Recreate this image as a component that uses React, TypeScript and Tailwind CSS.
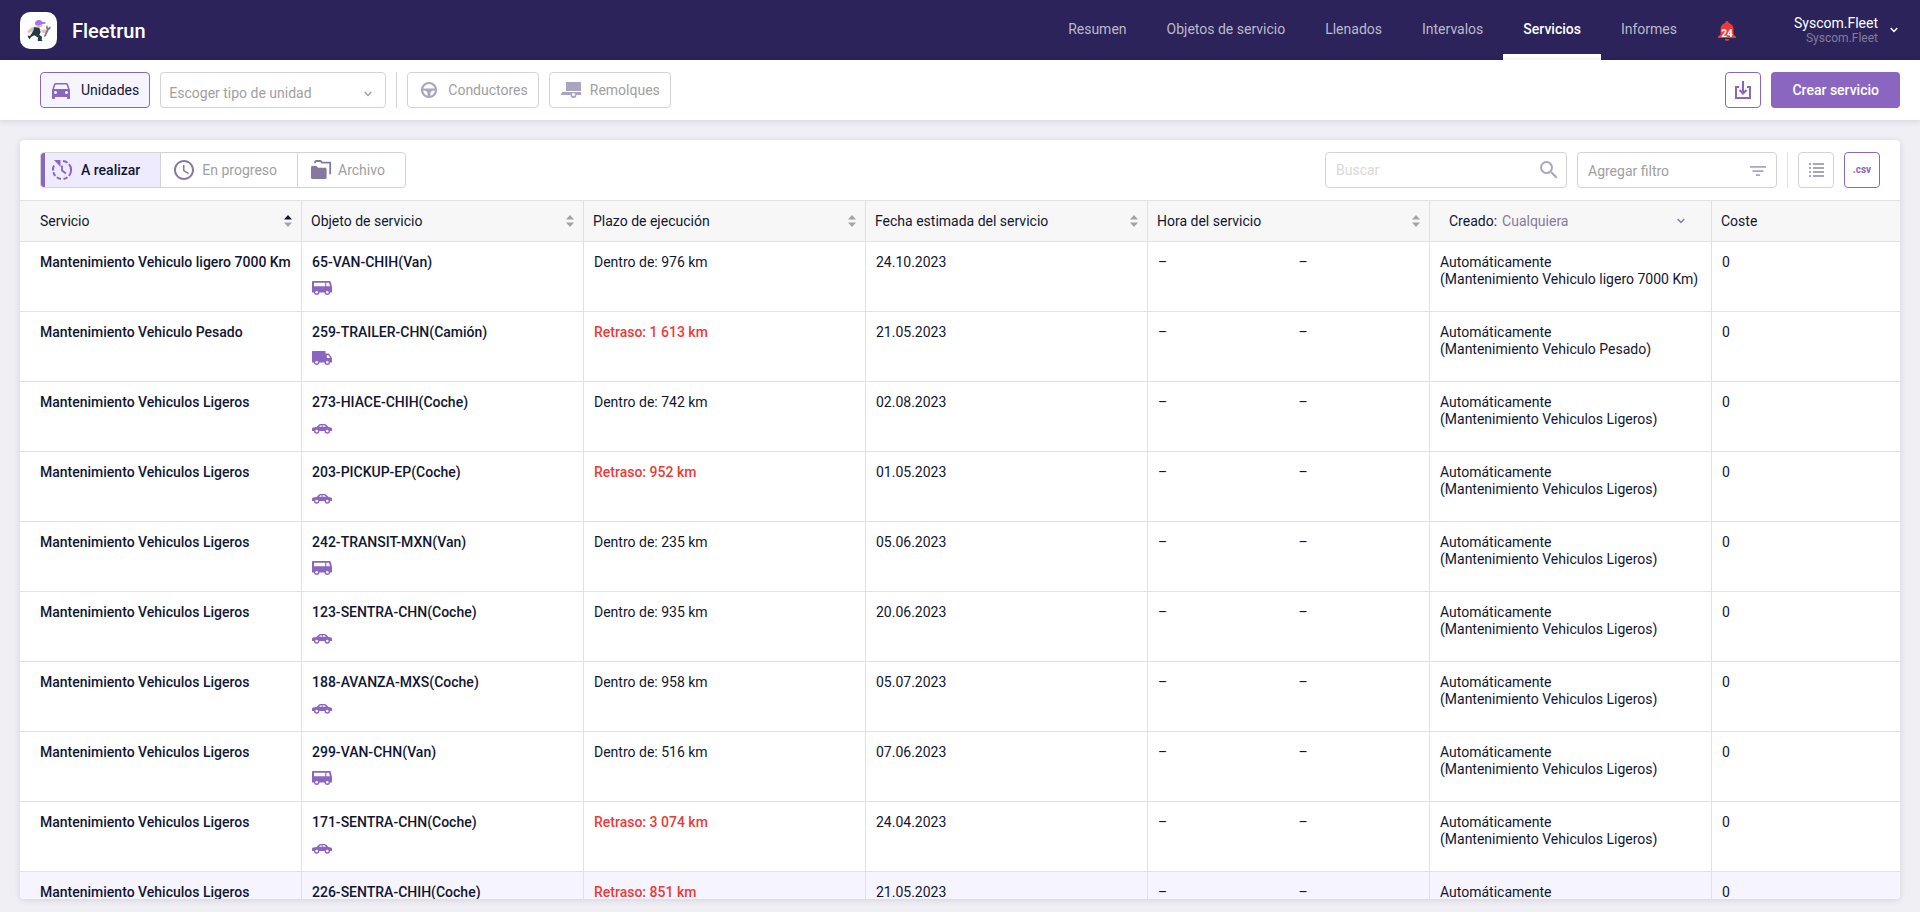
import type { ReactNode } from "react";
import { MdAccessTime, MdDirectionsCar, MdSearch } from "react-icons/md";
import clsx from "clsx";

type VehicleType = "Van" | "Camión" | "Coche";

const navItems = [
  "Resumen",
  "Objetos de servicio",
  "Llenados",
  "Intervalos",
  "Servicios",
  "Informes",
];

const columns = [
  { title: "Servicio", sorted: true },
  { title: "Objeto de servicio" },
  { title: "Plazo de ejecución" },
  { title: "Fecha estimada del servicio" },
  { title: "Hora del servicio" },
];

const services: {
  id: number;
  name: string;
  unit: string;
  type: VehicleType;
  term: string;
  late?: boolean;
  date: string;
  active?: boolean;
}[] = [
  { id: 1, name: "Mantenimiento Vehiculo ligero 7000 Km", unit: "65-VAN-CHIH", type: "Van", term: "Dentro de: 976 km", date: "24.10.2023" },
  { id: 2, name: "Mantenimiento Vehiculo Pesado", unit: "259-TRAILER-CHN", type: "Camión", term: "Retraso: 1 613 km", late: true, date: "21.05.2023" },
  { id: 3, name: "Mantenimiento Vehiculos Ligeros", unit: "273-HIACE-CHIH", type: "Coche", term: "Dentro de: 742 km", date: "02.08.2023" },
  { id: 4, name: "Mantenimiento Vehiculos Ligeros", unit: "203-PICKUP-EP", type: "Coche", term: "Retraso: 952 km", late: true, date: "01.05.2023" },
  { id: 5, name: "Mantenimiento Vehiculos Ligeros", unit: "242-TRANSIT-MXN", type: "Van", term: "Dentro de: 235 km", date: "05.06.2023" },
  { id: 6, name: "Mantenimiento Vehiculos Ligeros", unit: "123-SENTRA-CHN", type: "Coche", term: "Dentro de: 935 km", date: "20.06.2023" },
  { id: 7, name: "Mantenimiento Vehiculos Ligeros", unit: "188-AVANZA-MXS", type: "Coche", term: "Dentro de: 958 km", date: "05.07.2023" },
  { id: 8, name: "Mantenimiento Vehiculos Ligeros", unit: "299-VAN-CHN", type: "Van", term: "Dentro de: 516 km", date: "07.06.2023" },
  { id: 9, name: "Mantenimiento Vehiculos Ligeros", unit: "171-SENTRA-CHN", type: "Coche", term: "Retraso: 3 074 km", late: true, date: "24.04.2023" },
  { id: 10, name: "Mantenimiento Vehiculos Ligeros", unit: "226-SENTRA-CHIH", type: "Coche", term: "Retraso: 851 km", late: true, date: "21.05.2023", active: true },
];

function Logo() {
  return (
    <svg viewBox="0 0 111 111" className="h-[37px] w-[37px]" aria-hidden="true">
      <path d="M30 48l18-5 6 8-10 6-8 2z" fill="#c9c6cc" />
      <path d="M22 59l7-9 8 3-3 8-7 2z" fill="#f3b4ae" />
      <path d="M48 37h18l1 5-5 4H51z" fill="#f3b4ae" />
      <path d="M45 36c0-9 5-12 12-12 6 0 9 3 10 6l10 1-1 4-9 2-8 3H47z" fill="#a374ee" />
      <path d="M42 46l17 1 3 12-4 10 8 5-1 9 3 4H54l-1-4 2-6-12-7-9 4-5 8-6-8 3-4 3 3 7-10 5-9z" fill="#243a45" />
      <path d="M58 48l12 8-1 6-8-4z" fill="#dddbe0" />
      <path d="M66 55l8-3 6 4-1 6-9 2z" fill="#f3b4ae" />
      <path d="M80 40l3 1v5l3 1 4-4 2 1-1 7-5 3-8 18-5 3-1-3 8-19-2-6z" fill="#7d7c83" />
    </svg>
  );
}

function SteeringIcon() {
  return (
    <svg viewBox="0 0 18 18" className="h-[18px] w-[18px]" aria-hidden="true">
      <circle cx="9" cy="9" r="7" fill="none" stroke="#a9a5c0" strokeWidth="2.2" />
      <path d="M2 7.6h14v1.8h-2.600c-2 .3-3 1.400-3 3.400V16H7.600v-3.200c0-2-1-3.100-3-3.400H2z" fill="#a9a5c0" />
    </svg>
  );
}

function TrailerIcon() {
  return (
    <svg viewBox="0 0 22 18" className="h-[18px] w-[22px]" aria-hidden="true">
      <path d="M6 1h15v9H6z" fill="#a9a5c0" />
      <path d="M2 11h19v3h-4.500a3 3 0 0 1-6 0H1v-1.500h1z" fill="#a9a5c0" />
      <circle cx="13.500" cy="13.500" r="1.600" fill="#fff" />
    </svg>
  );
}

function DashedClockIcon() {
  return (
    <svg viewBox="0 0 22 22" className="h-[22px] w-[22px]" fill="none" stroke="#8b66c1" strokeWidth="2" aria-hidden="true">
      <path d="M12 2.100a9 9 0 0 1 4.500 1.700M18 5.200a9 9 0 0 1 0 11.600M16.500 18.200a9 9 0 0 1-4 1.700M10 19.900a9 9 0 0 1-4.200-1.700M4.300 16.900a9 9 0 0 1-1.900-3.700M2 11.500a9 9 0 0 1 1-5" />
      <path d="M11 6.500v5l4 3" strokeWidth="1.800" />
      <path d="M3 1h6.500v7z" fill="#8b66c1" stroke="none" />
    </svg>
  );
}

function FoldersIcon() {
  return (
    <svg viewBox="0 0 22 20" className="h-5 w-[22px]" aria-hidden="true">
      <path d="M1 7.500C1 6.500 1.600 6 2.500 6h4L8 7.700h7c1 0 1.600.6 1.600 1.500v8.300c0 .9-.6 1.500-1.600 1.500H2.600C1.600 19 1 18.400 1 17.500z" fill="#85799f" />
      <path d="M5 3.200V2.500C5 1.500 5.500 1 6.500 1h4L12 2.700h8.200v11.600" fill="none" stroke="#85799f" strokeWidth="1.800" />
    </svg>
  );
}

function DownloadIcon() {
  return (
    <svg viewBox="0 0 18 18" className="h-[18px] w-[18px]" fill="none" stroke="#8b66c1" strokeWidth="2" aria-hidden="true">
      <path d="M5 6H2v11h14V6h-3" />
      <path d="M9 0v12M5.500 9L9 12.500 12.500 9" />
    </svg>
  );
}

function FilterIcon() {
  return (
    <svg viewBox="0 0 16 10" className="h-[10px] w-4" fill="#a9a5c0" aria-hidden="true">
      <path d="M0 0h16v1.700H0zM2.500 4.200h11v1.700h-11zM6 8.300h4V10H6z" />
    </svg>
  );
}

function ListIcon() {
  return (
    <svg viewBox="0 0 15 15" className="h-[15px] w-[15px]" fill="#a9a5c0" aria-hidden="true">
      <path d="M0 0h2v2H0zM4 0h11v2H4zM0 4h2v2H0zM4 4h11v2H4zM0 8h2v2H0zM4 8h11v2H4zM0 12h2v2H0zM4 12h11v2H4z" />
    </svg>
  );
}

function Chevron({ className }: { className?: string }) {
  return (
    <svg
      viewBox="0 0 8 6"
      className={clsx("h-[6px] w-2 shrink-0", className)}
      fill="none"
      stroke="currentColor"
      strokeWidth="1.500"
      aria-hidden="true"
    >
      <path d="M.7 1L4 4.500 7.300 1" />
    </svg>
  );
}

function SortIcon({ active }: { active?: boolean }) {
  return (
    <svg viewBox="0 0 8 12" className="h-3 w-2" aria-hidden="true">
      <path d="M4 0l4 4.500H0z" fill={active ? "#101633" : "#a3a3a3"} />
      <path d="M4 12l4-4.500H0z" fill="#a3a3a3" />
    </svg>
  );
}

function VehicleIcon({ type }: { type: VehicleType }) {
  const wheelY = type === "Coche" ? 10 : 11.3;

  return (
    <svg viewBox="0 0 20 14" className="mt-[10px] block h-[14px] w-5" fill="#8b66c1" aria-hidden="true">
      {type === "Van" && (
        <>
          <path d="M1 0h16.500c.8 0 1.100.5 1.300 1.200L20 6v5.500H0V1c0-.6.400-1 1-1z" />
          <path d="M2 1.700h11.200v3.600H2zM14.300 1.700h2.700l.9 3.600h-3.600z" fill="#fff" />
        </>
      )}
      {type === "Camión" && (
        <>
          <path d="M1 0h12.500v2.500H16c.8 0 1.200.3 1.600.9L20 7v4.500H0V1c0-.6.400-1 1-1z" />
          <path d="M14.800 4.200H16.500l1.700 2.800h-3.400z" fill="#fff" />
        </>
      )}
      {type === "Coche" && (
        <>
          <path d="M4.500 6L7 3.600c.4-.4.800-.6 1.500-.6h4c.7 0 1.200.2 1.700.7L16.500 6l2.500.6c.7.2 1 .6 1 1.200V10H0V7.800c0-.7.400-1 1-1.200z" />
          <path d="M7 5.800l1.500-1.600h1.200v1.600zM10.600 4.200h1.800l1.600 1.600h-3.400z" fill="#fff" />
        </>
      )}
      <circle cx="4.700" cy={wheelY} r="2.700" />
      <circle cx="15.300" cy={wheelY} r="2.700" />
      <circle cx="4.700" cy={wheelY} r="1.300" fill="#fff" />
      <circle cx="15.300" cy={wheelY} r="1.300" fill="#fff" />
    </svg>
  );
}

function ObjectButton({ icon, children }: { icon: ReactNode; children: ReactNode }) {
  return (
    <button className="flex h-9 items-center rounded border border-[#d3d3d3] px-[10px] text-[#a0a0a0]">
      <span className="mr-2 flex w-[22px] justify-center">{icon}</span>
      {children}
    </button>
  );
}

function Header() {
  return (
    <header className="flex h-[60px] shrink-0 items-center bg-[#2b2359] pl-5 pr-[22px] text-white">
      <div className="flex h-[37px] w-[37px] items-center justify-center rounded-[10px] bg-white">
        <Logo />
      </div>
      <h1 className="ml-[15px] pt-[2px] text-xl font-medium">Fleetrun</h1>
      <nav className="ml-auto flex self-stretch">
        {navItems.map((item) => (
          <a
            key={item}
            href="#"
            className={clsx(
              "flex items-center border-b-[6px] px-5 pt-1",
              item === "Servicios"
                ? "border-white font-medium text-white"
                : "border-transparent text-[#bdbacb]"
            )}
          >
            {item}
          </a>
        ))}
      </nav>
      <button className="relative ml-[21px] mt-[2px] h-5 w-[18px]" aria-label="Notificaciones">
        <svg viewBox="0 0 18 20" className="h-5 w-[18px]" fill="#ee3a37" aria-hidden="true">
          <path d="M9 0c1 0 1.500.7 1.500 1.700C13.500 2.500 15.500 5 15.500 8v5.500L18 15.500V17H0v-1.500l2.500-2V8c0-3 2-5.500 5-6.300C7.500.7 8 0 9 0zM6.800 18h4.400c-.2 1.200-1 2-2.200 2s-2-.8-2.200-2z" />
        </svg>
        <span className="absolute inset-x-0 top-[7px] text-center text-[10px] font-bold leading-[12px]">24</span>
      </button>
      <button className="ml-[58px] flex items-center gap-3 text-right">
        <span>
          <span className="block leading-4">Syscom.Fleet</span>
          <span className="block text-xs leading-[14px] text-[#837e9e]">Syscom.Fleet</span>
        </span>
        <Chevron />
      </button>
    </header>
  );
}

function ObjectBar() {
  return (
    <div className="z-10 flex h-[60px] shrink-0 items-center gap-[10px] bg-white pl-10 pr-5 shadow-[0_1px_6px_rgba(43,35,89,0.15)]">
      <button className="flex h-9 items-center gap-2 rounded border border-[#8b66c1] bg-[#f6f4ff] pl-2 pr-[10px] text-[#101633]">
        <MdDirectionsCar className="h-6 w-6 text-[#8b66c1]" />
        Unidades
      </button>
      <div className="relative w-[226px]">
        <select
          aria-label="Tipo de unidad"
          className="h-9 w-full appearance-none rounded border border-[#d3d3d3] bg-white px-2 pt-[6px] text-[#a0a0a0]"
        >
          <option>Escoger tipo de unidad</option>
        </select>
        <Chevron className="pointer-events-none absolute right-[14px] top-[19px] text-[#a0a0a0]" />
      </div>
      <div className="h-9 w-px bg-[#d3d3d3]" />
      <ObjectButton icon={<SteeringIcon />}>Conductores</ObjectButton>
      <ObjectButton icon={<TrailerIcon />}>Remolques</ObjectButton>
      <button
        aria-label="Importar"
        className="ml-auto flex h-9 w-9 items-center justify-center rounded border border-[#8b66c1]"
      >
        <DownloadIcon />
      </button>
      <button className="h-9 rounded bg-[#8b66c1] px-[21px] font-medium text-white">Crear servicio</button>
    </div>
  );
}

function TableToolbar() {
  return (
    <div className="flex h-[60px] shrink-0 items-center gap-[10px] px-5">
      <div className="flex h-9 overflow-hidden rounded border border-[#d3d3d3] text-[#a0a0a0]">
        <button className="flex items-center gap-2 border-l-4 border-[#8b66c1] bg-[#efebff] pl-[6px] pr-5 font-medium text-[#101633]">
          <DashedClockIcon />
          A realizar
        </button>
        <button className="flex items-center gap-[6px] border-l border-[#d3d3d3] pl-[11px] pr-5">
          <MdAccessTime className="h-6 w-6 text-[#85799f]" />
          En progreso
        </button>
        <button className="flex items-center gap-[6px] border-l border-[#d3d3d3] pl-3 pr-5">
          <FoldersIcon />
          Archivo
        </button>
      </div>
      <div className="relative ml-auto w-[242px]">
        <input
          type="search"
          aria-label="Buscar"
          placeholder="Buscar"
          className="h-9 w-full rounded border border-[#d3d3d3] pl-[10px] pr-10 placeholder:text-[#d9d9d9]"
        />
        <MdSearch className="absolute right-[6px] top-[6px] h-6 w-6 text-[#a9a5c0]" />
      </div>
      <div className="relative w-[200px]">
        <select
          aria-label="Agregar filtro"
          className="h-9 w-full appearance-none rounded border border-[#d3d3d3] bg-white px-[10px] pt-[2px] text-[#a0a0a0]"
        >
          <option>Agregar filtro</option>
        </select>
        <span className="pointer-events-none absolute right-[11px] top-[14px]">
          <FilterIcon />
        </span>
      </div>
      <div className="h-9 w-px bg-[#e1e1e4]" />
      <button aria-label="Columnas" className="flex h-9 w-9 items-center justify-center rounded border border-[#d3d3d3]">
        <ListIcon />
      </button>
      <button className="h-9 w-9 rounded border border-[#8b66c1] text-[10px] font-bold text-[#8b66c1]">.csv</button>
    </div>
  );
}

function ServicesTable() {
  return (
    <div className="min-h-0 flex-1 overflow-auto [scrollbar-width:none]">
      <table className="w-full table-fixed border-separate border-spacing-0 text-left leading-[17px]">
        <thead className="sticky top-0 bg-[#f7f7f7]">
          <tr className="h-[42px]">
            {columns.map((column) => (
              <th
                key={column.title}
                className="w-[15%] border-y border-r border-[#e1e1e4] px-[9px] font-normal first:pl-5"
              >
                <button className="flex w-full items-center justify-between">
                  {column.title}
                  <SortIcon active={column.sorted} />
                </button>
              </th>
            ))}
            <th className="w-[15%] border-y border-r border-[#e1e1e4] pl-[19px] pr-[26px] font-normal">
              <label className="relative flex items-center gap-[5px]">
                Creado:
                <select className="flex-1 appearance-none text-[#85799f]">
                  <option>Cualquiera</option>
                </select>
                <Chevron className="pointer-events-none absolute right-0 text-[#85799f]" />
              </label>
            </th>
            <th className="w-[10%] border-y border-[#e1e1e4] px-[9px] font-normal">Coste</th>
          </tr>
        </thead>
        <tbody>
          {services.map((service) => (
            <tr
              key={service.id}
              className={clsx(
                "h-[70px] align-top *:border-b *:border-[#e1e1e4] *:px-[10px] *:pt-3",
                service.active && "bg-[#f6f4ff]"
              )}
            >
              <td className="whitespace-nowrap border-r first:pl-5 font-medium">{service.name}</td>
              <td className="border-r font-medium">
                {service.unit}({service.type})
                <VehicleIcon type={service.type} />
              </td>
              <td className={clsx("border-r", service.late && "font-medium text-[#ee3a37]")}>{service.term}</td>
              <td className="border-r">{service.date}</td>
              <td className="border-r">
                <div className="grid grid-cols-2 gap-5">
                  <span>–</span>
                  <span>–</span>
                </div>
              </td>
              <td className="whitespace-nowrap border-r">
                Automáticamente
                <br />({service.name})
              </td>
              <td>0</td>
            </tr>
          ))}
        </tbody>
      </table>
    </div>
  );
}

export default function App() {
  return (
    <div className="flex h-screen flex-col bg-[#f0eff4] font-[Roboto,sans-serif] text-sm text-[#101633]">
      <Header />
      <ObjectBar />
      <main className="mx-5 mb-[13px] mt-5 flex min-h-0 flex-1 flex-col overflow-hidden rounded bg-white shadow-[0_1px_6px_rgba(43,35,89,0.15)]">
        <TableToolbar />
        <ServicesTable />
      </main>
    </div>
  );
}
